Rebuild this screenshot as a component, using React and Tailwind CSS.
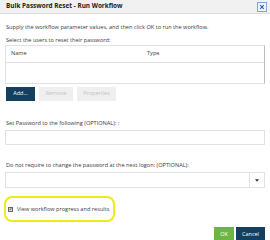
import React from 'react';

export default function App() {
  return (
    <div className="w-[270px] h-[240px] bg-white flex flex-col overflow-hidden font-['Open_Sans',sans-serif] text-[#333]">
      {/* title bar */}
      <div className="h-[14px] bg-[#f1f1f1] border-b border-[#dcdcdc] flex items-center justify-between pl-[6px] pr-[3px] shrink-0">
        <span className="text-[6.4px] font-bold leading-none text-[#222]">Bulk Password Reset - Run Workflow</span>
        <button className="w-[10px] h-[10px] border border-[#7aa7e0] bg-[#eef4fc] flex items-center justify-center">
          <svg viewBox="0 0 10 10" className="w-[6px] h-[6px]">
            <path d="M2 2 L8 8 M8 2 L2 8" stroke="#2a5fa8" strokeWidth="1.8" />
          </svg>
        </button>
      </div>

      <div className="flex flex-col px-[5px] text-[5.6px] leading-none text-[#3a3a3a]">
        <p className="mt-[11px] pl-[1px]">Supply the workflow parameter values, and then click OK to run the workflow.</p>
        <p className="mt-[7px] pl-[1px]">Select the users to reset their password:</p>

        {/* table */}
        <div className="mt-[2px] h-[39px] border border-[#e2e2e2] border-r-[#bdbdbd] flex flex-col">
          <div className="h-[17px] border-b border-[#e2e2e2] flex items-center">
            <span className="w-[141px] pl-[5px]">Name</span>
            <span>Type</span>
          </div>
        </div>

        {/* buttons */}
        <div className="mt-[3px] flex gap-[4px] pl-[1px]">
          <button className="w-[29px] h-[14px] bg-[#12405e] text-white text-[5.5px] leading-none">Add...</button>
          <button className="w-[34px] h-[14px] bg-[#efefef] text-[#c4c4c4] text-[5.5px] leading-none">Remove</button>
          <button className="w-[39px] h-[14px] bg-[#efefef] text-[#c4c4c4] text-[5.5px] leading-none">Properties</button>
        </div>

        <p className="mt-[20px] pl-[1px]">Set Password to the following (OPTIONAL): :</p>
        <div className="mt-[3px] h-[15px] border border-[#e2e2e2]"></div>

        <p className="mt-[18px] pl-[1px]">Do not require to change the password at the next logon: (OPTIONAL):</p>
        <div className="mt-[4px] h-[16px] border border-[#e2e2e2] flex justify-end">
          <div className="w-[15px] border-l border-[#e2e2e2] flex items-center justify-center">
            <svg viewBox="0 0 6 4" className="w-[4px] h-[3px]">
              <path d="M0 0 L6 0 L3 4 Z" fill="#333" />
            </svg>
          </div>
        </div>

        {/* highlighted checkbox */}
        <div className="mt-[8px] w-[111px] h-[26px] border-2 border-[#ecec1a] rounded-[8px] flex items-center gap-[4px] pl-[2px] -ml-[1px]">
          <span className="w-[5px] h-[5px] border border-[#666] bg-[#ddd] flex items-center justify-center">
            <svg viewBox="0 0 6 6" className="w-[4px] h-[4px]">
              <path d="M1 3 L2.5 4.5 L5 1" stroke="#222" strokeWidth="1.2" fill="none" />
            </svg>
          </span>
          <span>View workflow progress and results</span>
        </div>

        {/* footer */}
        <div className="mt-[5px] flex justify-end gap-[2px]">
          <button className="w-[20px] h-[14px] bg-[#6cb643] text-white text-[5.5px] leading-none">OK</button>
          <button className="w-[29px] h-[14px] bg-[#12405e] text-white text-[5.5px] leading-none">Cancel</button>
        </div>
      </div>
    </div>
  );
}
